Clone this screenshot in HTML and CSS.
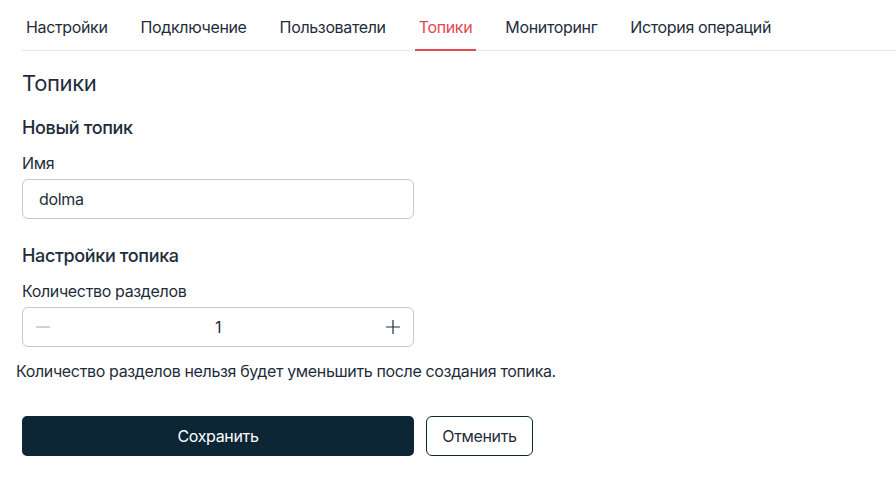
FILE: index.html
```
<!DOCTYPE html>
<html>
<head>
<meta charset="utf-8">
<title>Топики</title>
<link rel="stylesheet" href="styles.css">
</head>
<body>
<div class="tabs">
	<a class="tab">Настройки</a>
	<a class="tab">Подключение</a>
	<a class="tab">Пользователи</a>
	<a class="tab active">Топики</a>
	<a class="tab">Мониторинг</a>
	<a class="tab">История операций</a>
</div>

<div class="content">
	<h1 class="title">Топики</h1>
	<h2 class="subtitle">Новый топик</h2>
	<div class="label">Имя</div>
	<input class="inputText" type="text" value="dolma">

	<h2 class="subtitle section2">Настройки топика</h2>
	<div class="label">Количество разделов</div>
	<div class="stepper">
		<span class="stepBtn minus">
			<svg width="16" height="16" viewBox="0 0 16 16"><path d="M1 8h14" stroke="#aeb6bd" stroke-width="1.2"/></svg>
		</span>
		<span class="stepValue">1</span>
		<span class="stepBtn plus">
			<svg width="16" height="16" viewBox="0 0 16 16"><path d="M1 8h14M8 1v14" stroke="#1f2d3a" stroke-width="1.2"/></svg>
		</span>
	</div>
	<div class="note">Количество разделов нельзя будет уменьшить после создания топика.</div>

	<div class="actions">
		<button class="btn btnPrimary">Сохранить</button>
		<button class="btn btnCancel">Отменить</button>
	</div>
</div>
</body>
</html>
```
FILE: styles.css
```
body{margin:0;font-family:Inter, "Noto Sans", sans-serif;color:#1f2d3a;background:#fff;letter-spacing:-0.35px;}
.tabs{display:flex;gap:25px;margin-left:22px;border-bottom:1px solid #e9ebed;height:50px;}
.tab{padding:17px 4px 0 4px;font-size:16px;line-height:20px;color:#1f2d3a;border-bottom:2px solid transparent;box-sizing:border-box;height:51px;margin-bottom:-1px;}
.tab.active{color:#e5484d;border-bottom-color:#e5484d;}
.content{padding:0 22px;}
.title{font-size:22px;font-weight:400;line-height:28px;margin:18px 0 0 0;}
.subtitle{font-size:18px;font-weight:500;line-height:24px;margin:19px 0 0 0;}
.section2{margin-top:25px;}
.label{font-size:16px;line-height:20px;margin:13px 0 6px 0;}
.inputText
{
	display:block;
	box-sizing:border-box;
	width:392px;
	height:40px;
	border:1px solid #c3c9ce;
	border-radius:6px;
	padding:0 16px;
	font-family:inherit;
	font-size:16px;
	letter-spacing:inherit;
	color:#1f2d3a;
	outline:none;
}
.stepper
{
	display:flex;
	align-items:center;
	box-sizing:border-box;
	width:392px;
	height:40px;
	border:1px solid #c3c9ce;
	border-radius:6px;
	padding:0 12px;
}
.stepBtn{display:flex;width:16px;height:16px;}
.stepValue{flex:1;text-align:center;font-size:16px;}
.note{font-size:16px;line-height:20px;margin:14px 0 0 -6px;}
.actions{display:flex;gap:12px;margin-top:35px;}
.btn
{
	height:40px;
	font-family:inherit;
	font-size:16px;
	letter-spacing:inherit;
	border-radius:5px;
	cursor:pointer;
}
.btnPrimary{width:392px;background:#0c2636;color:#fff;border:none;}
.btnCancel{width:107px;background:#fff;color:#1f2d3a;border:1px solid #0c2636;border-radius:6px;}
```
